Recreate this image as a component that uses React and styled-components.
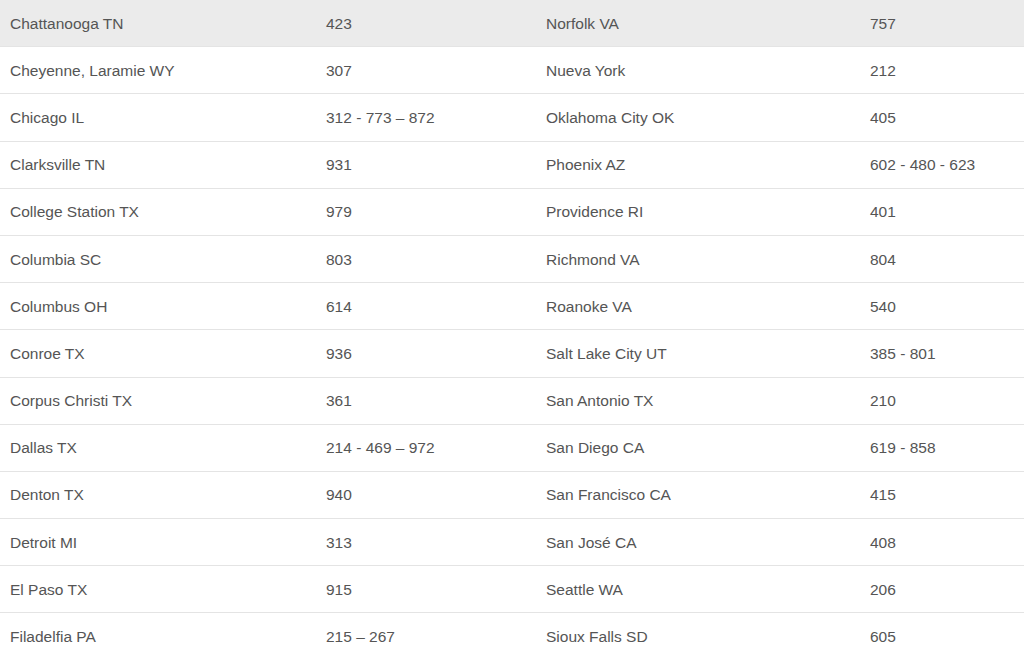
import React from "react";
import styled, { createGlobalStyle } from "styled-components";

const GlobalStyle = createGlobalStyle`
  body {
    margin: 0;
    background: #fff;
    font-family: "Liberation Sans", Arial, sans-serif;
  }
`;

const Table = styled.div`
  width: 1024px;
`;

const Row = styled.div`
  display: grid;
  grid-template-columns: 316px 220px 324px 1fr;
  align-items: center;
  height: 47.2px;
  box-sizing: border-box;
  padding-top: 1px;
  border-bottom: 1px solid #e4e4e4;
  background: ${(props) => (props.$shaded ? "#ebebeb" : "#fff")};
`;

const Cell = styled.div`
  padding-left: 10px;
  font-size: 15.5px;
  color: #555;
  white-space: nowrap;
`;

const rows = [
  ["Chattanooga TN", "423", "Norfolk VA", "757"],
  ["Cheyenne, Laramie WY", "307", "Nueva York", "212"],
  ["Chicago IL", "312 - 773 – 872", "Oklahoma City OK", "405"],
  ["Clarksville TN", "931", "Phoenix AZ", "602 - 480 - 623"],
  ["College Station TX", "979", "Providence RI", "401"],
  ["Columbia SC", "803", "Richmond VA", "804"],
  ["Columbus OH", "614", "Roanoke VA", "540"],
  ["Conroe TX", "936", "Salt Lake City UT", "385 - 801"],
  ["Corpus Christi TX", "361", "San Antonio TX", "210"],
  ["Dallas TX", "214 - 469 – 972", "San Diego CA", "619 - 858"],
  ["Denton TX", "940", "San Francisco CA", "415"],
  ["Detroit MI", "313", "San José CA", "408"],
  ["El Paso TX", "915", "Seattle WA", "206"],
  ["Filadelfia PA", "215 – 267", "Sioux Falls SD", "605"],
];

const App = () => {
  return (
    <>
      <GlobalStyle />
      <Table>
        {rows.map((row, i) => (
          <Row key={row[0]} $shaded={i === 0}>
            {row.map((text, j) => (
              <Cell key={j}>{text}</Cell>
            ))}
          </Row>
        ))}
      </Table>
    </>
  );
};

export default App;
